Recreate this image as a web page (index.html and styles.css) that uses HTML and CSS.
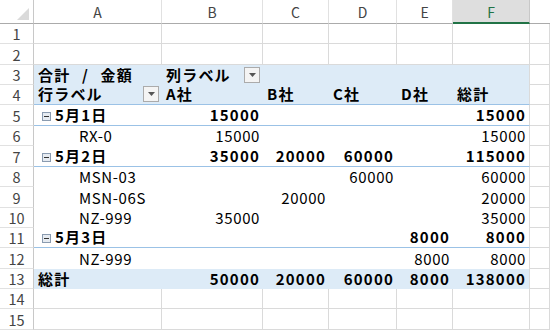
FILE: index.html
```html
<!DOCTYPE html>
<html lang="ja">
<head>
<meta charset="utf-8">
<link rel="stylesheet" href="styles.css">
</head>
<body>
<div class="sheet">
  <div class="row head">
    <div class="corner"><span class="tri"></span></div>
    <div class="ch">A</div><div class="ch">B</div><div class="ch">C</div><div class="ch">D</div><div class="ch">E</div><div class="ch sel">F</div><div class="ch last"></div>
  </div>

  <div class="row h20">
    <div class="rh">1</div><div class="c"></div><div class="c"></div><div class="c"></div><div class="c"></div><div class="c"></div><div class="c"></div><div class="c"></div>
  </div>
  <div class="row h21">
    <div class="rh">2</div><div class="c"></div><div class="c"></div><div class="c"></div><div class="c"></div><div class="c"></div><div class="c"></div><div class="c"></div>
  </div>

  <div class="row h20">
    <div class="rh">3</div>
    <div class="c p band b"><span class="ws">合計 / 金額</span></div>
    <div class="c p band b split">列ラベル<span class="dd"><svg width="7" height="4" viewBox="0 0 7 4"><path d="M0 0h7L3.5 4z" fill="#555"/></svg></span></div>
    <div class="c p band"></div><div class="c p band"></div><div class="c p band"></div><div class="c p band f"></div>
    <div class="c"></div>
  </div>
  <div class="row h20">
    <div class="rh">4</div>
    <div class="c p band line b split">行ラベル<span class="dd"><svg width="7" height="4" viewBox="0 0 7 4"><path d="M0 0h7L3.5 4z" fill="#555"/></svg></span></div>
    <div class="c p band line b">A社</div>
    <div class="c p band line b">B社</div>
    <div class="c p band line b">C社</div>
    <div class="c p band line b">D社</div>
    <div class="c p band line b f">総計</div>
    <div class="c"></div>
  </div>

  <div class="row h21">
    <div class="rh">5</div>
    <div class="c p line b grp"><span class="tog"><svg width="9" height="9" viewBox="0 0 9 9"><rect x="0.5" y="0.5" width="8" height="8" fill="#e6ebf1" stroke="#8a9bb0"/><path d="M2 4.5h5" stroke="#333" stroke-width="1"/></svg></span>5月1日</div>
    <div class="c p line b n">15000</div>
    <div class="c p line"></div><div class="c p line"></div><div class="c p line"></div>
    <div class="c p line b n f">15000</div>
    <div class="c"></div>
  </div>
  <div class="row h20">
    <div class="rh">6</div>
    <div class="c p item">RX-0</div>
    <div class="c p n">15000</div>
    <div class="c p"></div><div class="c p"></div><div class="c p"></div>
    <div class="c p n f">15000</div>
    <div class="c"></div>
  </div>
  <div class="row h21">
    <div class="rh">7</div>
    <div class="c p line b grp"><span class="tog"><svg width="9" height="9" viewBox="0 0 9 9"><rect x="0.5" y="0.5" width="8" height="8" fill="#e6ebf1" stroke="#8a9bb0"/><path d="M2 4.5h5" stroke="#333" stroke-width="1"/></svg></span>5月2日</div>
    <div class="c p line b n">35000</div>
    <div class="c p line b n">20000</div>
    <div class="c p line b n">60000</div>
    <div class="c p line"></div>
    <div class="c p line b n f">115000</div>
    <div class="c"></div>
  </div>
  <div class="row h20">
    <div class="rh">8</div>
    <div class="c p item">MSN-03</div>
    <div class="c p"></div><div class="c p"></div>
    <div class="c p n">60000</div>
    <div class="c p"></div>
    <div class="c p n f">60000</div>
    <div class="c"></div>
  </div>
  <div class="row h21">
    <div class="rh">9</div>
    <div class="c p item">MSN-06S</div>
    <div class="c p"></div>
    <div class="c p n">20000</div>
    <div class="c p"></div><div class="c p"></div>
    <div class="c p n f">20000</div>
    <div class="c"></div>
  </div>
  <div class="row h20">
    <div class="rh">10</div>
    <div class="c p item">NZ-999</div>
    <div class="c p n">35000</div>
    <div class="c p"></div><div class="c p"></div><div class="c p"></div>
    <div class="c p n f">35000</div>
    <div class="c"></div>
  </div>
  <div class="row h20">
    <div class="rh">11</div>
    <div class="c p line b grp"><span class="tog"><svg width="9" height="9" viewBox="0 0 9 9"><rect x="0.5" y="0.5" width="8" height="8" fill="#e6ebf1" stroke="#8a9bb0"/><path d="M2 4.5h5" stroke="#333" stroke-width="1"/></svg></span>5月3日</div>
    <div class="c p line"></div><div class="c p line"></div><div class="c p line"></div>
    <div class="c p line b n">8000</div>
    <div class="c p line b n f">8000</div>
    <div class="c"></div>
  </div>
  <div class="row h21">
    <div class="rh">12</div>
    <div class="c p item">NZ-999</div>
    <div class="c p"></div><div class="c p"></div><div class="c p"></div>
    <div class="c p n">8000</div>
    <div class="c p n f">8000</div>
    <div class="c"></div>
  </div>
  <div class="row h20">
    <div class="rh">13</div>
    <div class="c p band b">総計</div>
    <div class="c p band b n">50000</div>
    <div class="c p band b n">20000</div>
    <div class="c p band b n">60000</div>
    <div class="c p band b n">8000</div>
    <div class="c p band b n f">138000</div>
    <div class="c"></div>
  </div>

  <div class="row h20">
    <div class="rh">14</div><div class="c"></div><div class="c"></div><div class="c"></div><div class="c"></div><div class="c"></div><div class="c"></div><div class="c"></div>
  </div>
  <div class="row h21">
    <div class="rh">15</div><div class="c"></div><div class="c"></div><div class="c"></div><div class="c"></div><div class="c"></div><div class="c"></div><div class="c"></div>
  </div>
</div>
</body>
</html>
```

FILE: styles.css
```css
* { box-sizing: border-box; }
html, body { margin: 0; padding: 0; background: #fff; }
body {
  font-family: "Noto Sans CJK JP", "Noto Sans", sans-serif;
  color: #000;
  width: 550px;
  height: 330px;
  overflow: hidden;
}
.sheet { display: flex; flex-direction: column; }
.row {
  display: grid;
  grid-template-columns: 34px 128px 101px 66px 68px 56px 77px 1fr;
}
.head { height: 24px; }
.h20 { height: 20px; }
.h21 { height: 21px; }

.corner {
  position: relative;
  border-right: 1px solid #c8c8c8;
  border-bottom: 1px solid #ababab;
}
.tri {
  position: absolute;
  right: 4px;
  bottom: 3px;
  width: 0;
  height: 0;
  border-left: 12px solid transparent;
  border-bottom: 12px solid #dadada;
}
.ch {
  display: flex;
  align-items: center;
  justify-content: center;
  font-size: 14px;
  color: #444;
  border-right: 1px solid #e1e1e1;
  border-bottom: 1px solid #ababab;
  padding-top: 1px;
}
.ch.sel {
  background: #dedede;
  color: #217346;
  border-right: 1px solid #c8c8c8;
  border-bottom: 2px solid #217346;
}
.ch.last { border-right: none; }

.rh {
  display: flex;
  align-items: flex-end;
  justify-content: center;
  font-size: 14.5px;
  line-height: 18px;
  color: #444;
  border-right: 1px solid #c8c8c8;
  border-bottom: 1px solid #e1e1e1;
}

.c {
  display: flex;
  align-items: flex-end;
  font-size: 15px;
  line-height: 18px;
  letter-spacing: 0.6px;
  padding: 0 4px 1px 4px;
  white-space: nowrap;
  border-right: 1px solid #dadada;
  border-bottom: 1px solid #dadada;
}
.p { border-right: none; border-bottom: none; background: #fff; }
.p.f { border-right: 1px solid #dadada; }
.band { background: #ddebf7; }
.line { border-bottom: 1px solid #9bc2e6; }
.b { font-weight: 700; letter-spacing: 1.2px; }
.n { justify-content: flex-end; padding-right: 3px; }
.ws { word-spacing: 7px; }
.split { justify-content: space-between; padding-right: 3px; }
.dd {
  display: flex;
  align-items: center;
  justify-content: center;
  width: 16px;
  height: 16px;
  margin-bottom: 1px;
  background: #f4f4f4;
  border: 1px solid #ababab;
}
.grp { padding-left: 8px; }
.tog {
  display: inline-flex;
  width: 9px;
  height: 9px;
  margin: 0 4px 3px 0;
}
.item { padding-left: 45px; }
```
